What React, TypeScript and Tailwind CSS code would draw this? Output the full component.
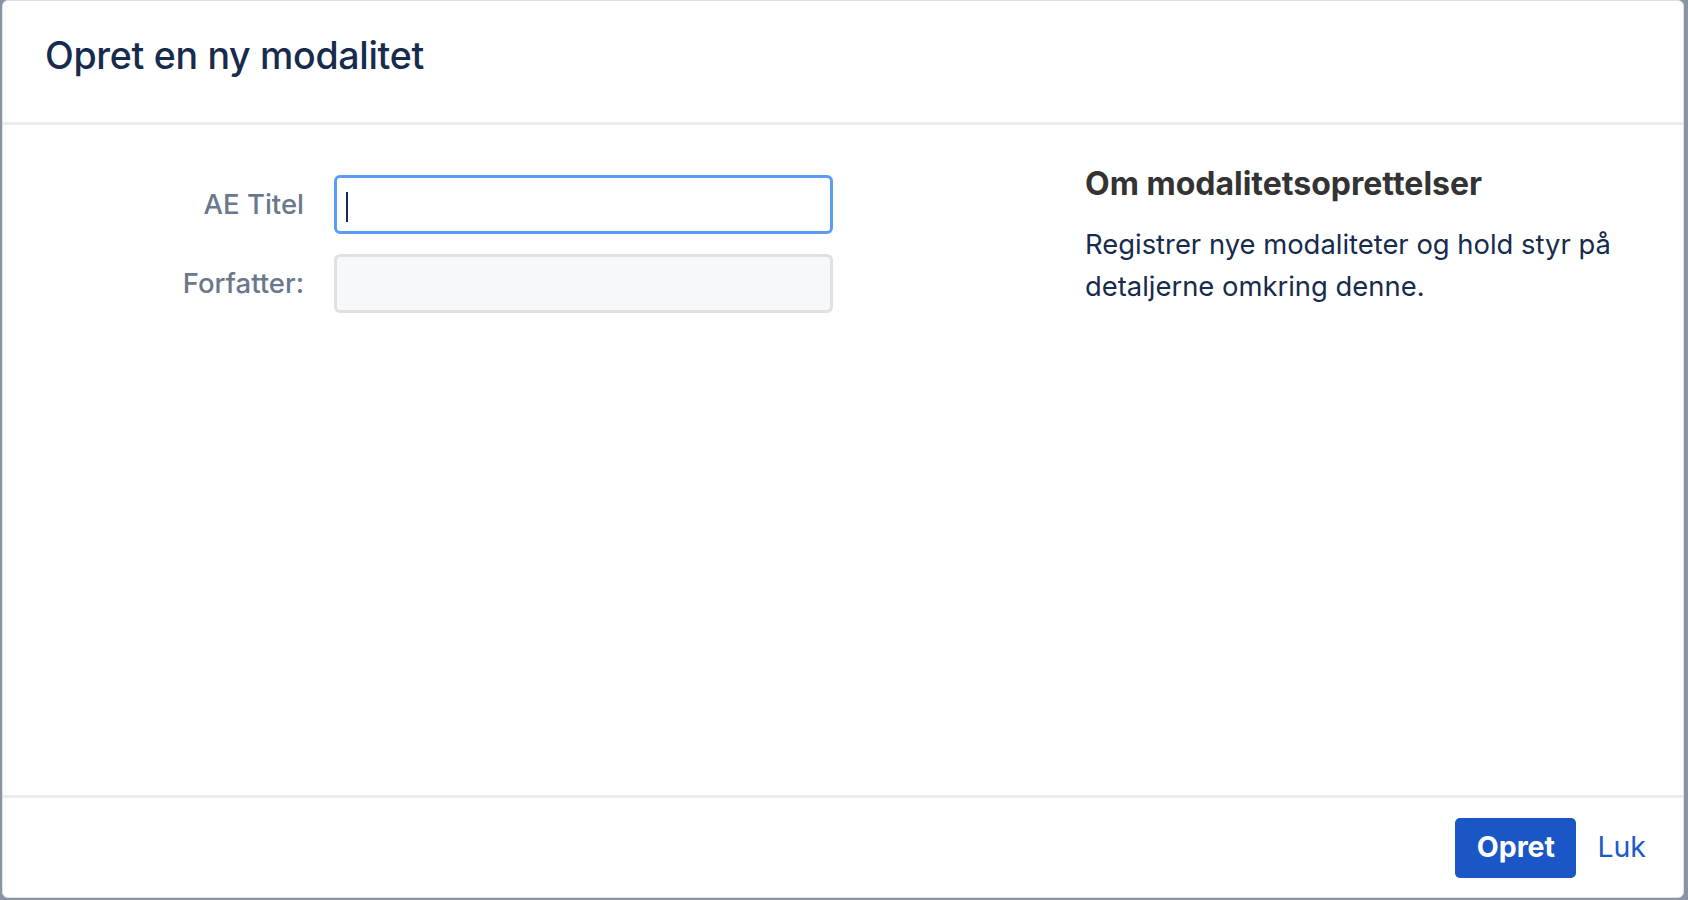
export default function App() {
  return (
    <div className="h-[900px] w-[1688px] bg-[#8993a4] pl-[2px] pr-[4px] pb-[2px] font-['Inter',sans-serif]">
      <div className="flex h-full flex-col rounded-[6px] border border-[#dfe1e6] bg-white">
        <div className="flex h-[121px] items-center pb-[10px] pl-[42px]">
          <h2 className="text-[37.5px] font-medium tracking-[-0.3px] text-[#172b4d]">Opret en ny modalitet</h2>
        </div>
        <div className="h-[3px] bg-[#ebecf0]" />

        <div className="flex flex-1">
          <form className="flex w-[1082px] flex-col gap-[20px] pt-[50px]">
            <div className="flex items-center">
              <label className="w-[331px] pr-[30px] text-right text-[27.5px] font-medium text-[#6b778c]">AE Titel</label>
              <div className="relative h-[59px] w-[499px] rounded-[6px] border-[3px] border-[#5b9cf5] bg-white">
                <span className="absolute left-[9px] top-[14px] h-[30px] w-[2px] bg-[#172b4d]" />
              </div>
            </div>
            <div className="flex items-center">
              <label className="w-[331px] pr-[30px] text-right text-[27.5px] font-medium text-[#6b778c]">Forfatter:</label>
              <div className="h-[59px] w-[499px] rounded-[6px] border-[3px] border-[#dfe1e6] bg-[#f7f8fa]" />
            </div>
          </form>

          <div className="w-[570px] pt-[39px]">
            <h3 className="text-[32px] font-bold leading-[40px] text-[#333333]">Om modalitetsoprettelser</h3>
            <p className="mt-[19px] text-[27.4px] leading-[42px] text-[#172b4d]">
              Registrer nye modaliteter og hold styr på detaljerne omkring denne.
            </p>
          </div>
        </div>

        <div className="h-[3px] bg-[#ebecf0]" />
        <div className="flex h-[99px] items-center justify-end gap-[21px] pr-[37px]">
          <button className="h-[60px] w-[121px] rounded-[5px] bg-[#1a56c6] text-[28.5px] font-bold text-white">Opret</button>
          <a className="text-[28.5px] text-[#1d5ac9]">Luk</a>
        </div>
      </div>
    </div>
  );
}
